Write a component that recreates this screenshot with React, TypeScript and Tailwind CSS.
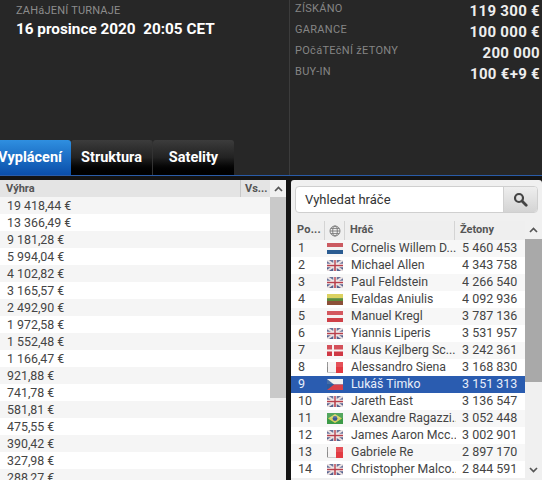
import React from "react"

type FlagCode = "nl" | "gb" | "lt" | "at" | "dk" | "it" | "cz" | "br"

const payouts = [
  "19 418,44 €", "13 366,49 €", "9 181,28 €", "5 994,04 €", "4 102,82 €", "3 165,57 €",
  "2 492,90 €", "1 972,58 €", "1 552,48 €", "1 166,47 €", "921,88 €", "741,78 €",
  "581,81 €", "475,55 €", "390,42 €", "327,98 €", "288,27 €",
]

const players: { name: string; flag: FlagCode; chips: string }[] = [
  { name: "Cornelis Willem D...", flag: "nl", chips: "5 460 453" },
  { name: "Michael Allen", flag: "gb", chips: "4 343 758" },
  { name: "Paul Feldstein", flag: "gb", chips: "4 266 540" },
  { name: "Evaldas Aniulis", flag: "lt", chips: "4 092 936" },
  { name: "Manuel Kregl", flag: "at", chips: "3 787 136" },
  { name: "Yiannis Liperis", flag: "gb", chips: "3 531 957" },
  { name: "Klaus Kejlberg Sc...", flag: "dk", chips: "3 242 361" },
  { name: "Alessandro Siena", flag: "it", chips: "3 168 830" },
  { name: "Lukáš Timko", flag: "cz", chips: "3 151 313" },
  { name: "Jareth East", flag: "gb", chips: "3 136 547" },
  { name: "Alexandre Ragazzi..", flag: "br", chips: "3 052 448" },
  { name: "James Aaron Mcc...", flag: "gb", chips: "3 002 901" },
  { name: "Gabriele Re", flag: "it", chips: "2 897 170" },
  { name: "Christopher Malco..", flag: "gb", chips: "2 844 591" },
]

const stats = [
  { label: "ZÍSKÁNO", value: "119 300 €" },
  { label: "GARANCE", value: "100 000 €" },
  { label: "POčáTEčNÍ žETONY", value: "200 000" },
  { label: "BUY-IN", value: "100 €+9 €" },
]

const Flag: React.FC<{ code: FlagCode }> = ({ code }) => (
  <svg width="16" height="11" viewBox="0 0 16 11" className="block shrink-0">
    {code === "nl" && (
      <>
        <rect width="16" height="4" fill="#c4444c" />
        <rect y="4" width="16" height="3" fill="#f2f2f2" />
        <rect y="7" width="16" height="4" fill="#2b5c92" />
      </>
    )}
    {code === "gb" && (
      <>
        <rect width="16" height="11" fill="#56608c" />
        <path d="M0 0 16 11M16 0 0 11" stroke="#e8dede" strokeWidth="2.2" />
        <path d="M8 0V11M0 5.5H16" stroke="#f4eeee" strokeWidth="3.4" />
        <path d="M8 0V11M0 5.5H16" stroke="#b8404c" strokeWidth="1.6" />
      </>
    )}
    {code === "lt" && (
      <>
        <rect width="16" height="4" fill="#d8cc4c" />
        <rect y="4" width="16" height="3" fill="#5c8c3c" />
        <rect y="7" width="16" height="4" fill="#8c5038" />
      </>
    )}
    {code === "at" && (
      <>
        <rect width="16" height="11" fill="#cf4048" />
        <rect y="4" width="16" height="3" fill="#f5f1f1" />
      </>
    )}
    {code === "dk" && (
      <>
        <rect width="16" height="11" fill="#cf3844" />
        <path d="M6 0V11M0 5.5H16" stroke="#f6f0f0" strokeWidth="2" />
      </>
    )}
    {code === "it" && (
      <>
        <rect width="16" height="11" fill="#f6f4f4" />
        <rect x="9" width="7" height="11" fill="#e23a42" />
        <rect width="1" height="11" fill="#8a8a8a" />
        <rect y="10" width="9" height="1" fill="#cccccc" />
      </>
    )}
    {code === "cz" && (
      <>
        <rect width="16" height="5.5" fill="#eeeeee" />
        <rect y="5.5" width="16" height="5.5" fill="#d8404a" />
        <path d="M0 0 7 5.5 0 11Z" fill="#2c5a9c" />
      </>
    )}
    {code === "br" && (
      <>
        <rect width="16" height="11" fill="#3c9a48" />
        <path d="M8 1 15 5.5 8 10 1 5.5Z" fill="#d8d060" />
        <circle cx="8" cy="5.5" r="2.4" fill="#3a5a96" />
      </>
    )}
    <rect width="16" height="5" fill="#ffffff" fillOpacity="0.12" />
  </svg>
)

const Chevron: React.FC<{ down?: boolean }> = ({ down }) => (
  <svg width="9" height="6" viewBox="0 0 9 6" className={down ? "rotate-180" : ""}>
    <path d="M1 5 4.5 1.5 8 5" fill="none" stroke="#555" strokeWidth="1.7" />
  </svg>
)

const App: React.FC = () => {
  return (
    <div className="w-[542px] h-[480px] overflow-hidden bg-[#141414] font-['Roboto',sans-serif]">
      {/* top info */}
      <div className="flex h-[176px] bg-[#272727] border-b border-[#2a5ca8]">
        <div className="w-[289px] shrink-0 flex flex-col justify-between overflow-hidden">
          <div className="pl-4 pt-[4px]">
            <div className="text-[11px] leading-[14px] text-[#8c8c8c] tracking-[0.2px]">ZAHáJENÍ TURNAJE</div>
            <div className="text-[15.3px] leading-[20px] mt-[1px] font-bold text-white whitespace-pre">16 prosince 2020  20:05 CET</div>
          </div>
          <div className="flex h-[35px] text-[14.5px] font-bold text-white">
            <div className="w-[71px] shrink-0 rounded-tr-[3px] bg-gradient-to-b from-[#2f8fe0] to-[#0b4eaa] flex items-center justify-end pr-[9px] overflow-hidden whitespace-nowrap">
              Vyplácení
            </div>
            <div className="w-[82px] shrink-0 rounded-t-[3px] border-r border-[#333] bg-gradient-to-b from-[#3c3c3c] via-[#222] to-[#000] flex items-center justify-center">
              Struktura
            </div>
            <div className="w-[81px] shrink-0 rounded-t-[3px] bg-gradient-to-b from-[#3c3c3c] via-[#222] to-[#000] flex items-center justify-center">
              Satelity
            </div>
          </div>
        </div>
        <div className="flex-1 border-l border-[#3c3c3c] pl-[5px] pr-[2px] h-[175px]">
          {stats.map((s) => (
            <div key={s.label} className="flex justify-between h-[21px]">
              <span className="text-[11px] leading-[17px] text-[#858585] tracking-[0.3px]">{s.label}</span>
              <span className="text-[15px] leading-[23px] font-bold text-[#eeeeee] tracking-[0.3px]">{s.value}</span>
            </div>
          ))}
        </div>
      </div>

      <div className="flex h-[304px] pt-[4px] gap-[5px]">
        {/* payouts */}
        <div className="w-[286px] shrink-0 flex bg-white overflow-hidden">
          <div className="flex-1 min-w-0">
            <div className="flex h-[17px] bg-[#e4e4e4] text-[11px] font-bold leading-[17px] text-[#555]">
              <div className="flex-1 pl-[6px]">Výhra</div>
              <div className="w-[30px] pl-[4px] border-l border-[#c8c8c8]">Vs...</div>
            </div>
            {payouts.map((p, i) => (
              <div key={p} className={`h-[17px] pl-[7px] text-[12.4px] leading-[17px] text-[#444] ${i % 2 === 0 ? "bg-[#f5f5f5]" : "bg-white"}`}>
                {p}
              </div>
            ))}
          </div>
          <div className="w-[16px] shrink-0 bg-[#f0f0f0]">
            <div className="h-[17px] flex items-center justify-center">
              <Chevron />
            </div>
            <div className="h-[201px] bg-[#c9c9c9]" />
          </div>
        </div>

        {/* players */}
        <div className="flex-1 min-w-0 bg-[#f0f0f0] rounded-t-[3px] overflow-hidden">
          <div className="px-1 pt-[6px] pb-[8px]">
            <div className="flex h-[27px] bg-white border border-[#cfcfcf] rounded-[4px] overflow-hidden">
              <div className="flex-1 pl-[9px] text-[13px] leading-[25px] text-[#333]">Vyhledat hráče</div>
              <div className="w-[34px] bg-gradient-to-b from-[#eeeeee] to-[#d4d4d4] border-l border-[#d0d0d0] flex items-center justify-center">
                <svg width="15" height="15" viewBox="0 0 15 15">
                  <circle cx="6" cy="6" r="4" fill="none" stroke="#444" strokeWidth="2.2" />
                  <path d="M9 9 13.2 13.2" stroke="#444" strokeWidth="2.8" strokeLinecap="round" />
                </svg>
              </div>
            </div>
          </div>
          <div className="flex">
            <div className="flex-1 min-w-0">
              <div className="flex h-[19px] bg-[#efefef] text-[11px] font-bold leading-[18px] text-[#555]">
                <div className="w-[33px] pl-[6px] tracking-[0.2px]">Po...</div>
                <div className="w-[21px] border-x border-[#d4d4d4] flex items-center justify-center">
                  <svg width="12" height="12" viewBox="0 0 12 12" fill="none" stroke="#777" strokeWidth="0.9">
                    <circle cx="6" cy="6" r="5" />
                    <ellipse cx="6" cy="6" rx="2.3" ry="5" />
                    <path d="M1 6H11M1.8 3.4H10.2M1.8 8.6H10.2" />
                  </svg>
                </div>
                <div className="w-[110px] pl-[5px] border-r border-[#d4d4d4]">Hráč</div>
                <div className="flex-1 pl-[5px]">Žetony</div>
              </div>
              {players.map((p, i) => {
                const selected = p.name === "Lukáš Timko"
                return (
                  <div
                    key={p.name}
                    className={`flex items-center h-[17px] text-[12.5px] ${selected ? "bg-[#2a5cb0] text-[#e8eefa]" : i % 2 === 0 ? "bg-[#f7f7f7] text-[#444]" : "bg-white text-[#444]"}`}
                  >
                    <div className="w-[36px] pl-[7px] shrink-0">{i + 1}</div>
                    <Flag code={p.flag} />
                    <div className="w-[113px] shrink-0 pl-[8px] text-[12.3px] whitespace-nowrap overflow-hidden">{p.name}</div>
                    <div className="flex-1 whitespace-nowrap pl-[6px]">{p.chips}</div>
                  </div>
                )
              })}
            </div>
            <div className="w-[17px] shrink-0 flex flex-col bg-[#f0f0f0] h-[257px]">
              <div className="h-[18px] flex items-center justify-center">
                <Chevron />
              </div>
              <div className="h-[143px] bg-[#a9a9a9]" />
              <div className="mt-auto h-[17px] flex items-center justify-center">
                <Chevron down />
              </div>
            </div>
          </div>
        </div>
      </div>
    </div>
  )
}

export default App
